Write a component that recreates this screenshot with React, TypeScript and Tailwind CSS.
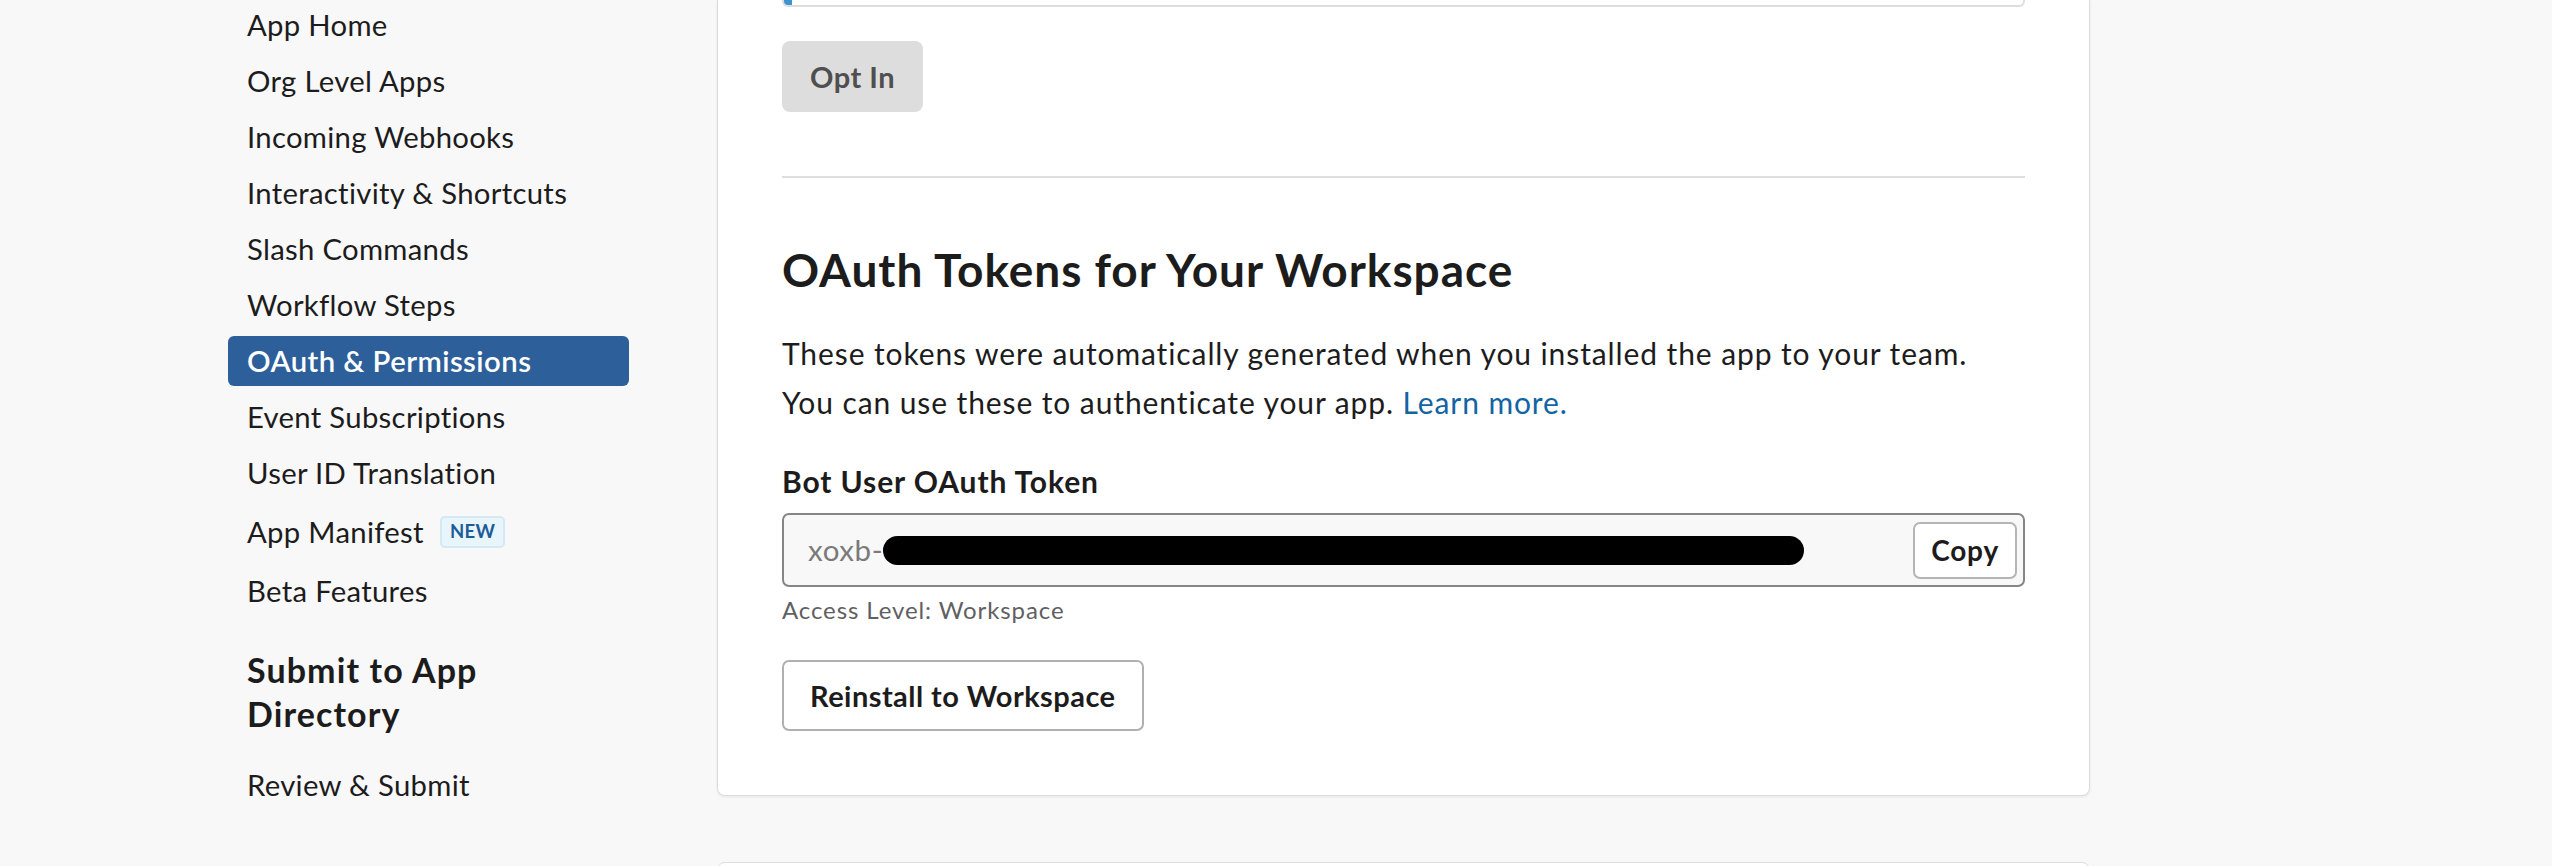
const navItems = [
  'App Home',
  'Org Level Apps',
  'Incoming Webhooks',
  'Interactivity & Shortcuts',
  'Slash Commands',
  'Workflow Steps',
  'OAuth & Permissions',
  'Event Subscriptions',
  'User ID Translation',
];

export default function App() {
  return (
    <div className="h-[866px] overflow-hidden bg-[#f8f8f8] font-['Lato','Noto_Sans',sans-serif] text-[#1d1c1d]">
      <div className="flex items-start pl-[228px]">
        {/* sidebar */}
        <nav className="flex w-[401px] shrink-0 flex-col text-[29.3px] tracking-[0.3px]">
          {navItems.map((label) => {
            const active = label === 'OAuth & Permissions';
            return (
              <div
                key={label}
                className={`mb-[6px] flex h-[50px] items-center rounded-[6px] px-[19px] ${
                  active ? 'bg-[#2d5f9b] font-semibold tracking-[0.45px] text-white' : ''
                }`}
              >
                {label}
              </div>
            );
          })}
          <div className="mb-[6px] flex h-[56px] items-center gap-[16px] px-[19px]">
            App Manifest
            <span className="flex h-[32px] items-center rounded-[5px] border-2 border-[#d4e9f4] bg-[#e8f5fa] px-[8px] text-[18.5px] font-bold tracking-[0.4px] text-[#1d5b99]">
              NEW
            </span>
          </div>
          <div className="flex h-[50px] items-center px-[19px]">Beta Features</div>

          <h3 className="mt-[32px] w-[290px] px-[19px] text-[34px] leading-[44px] font-bold tracking-[1.1px]">
            Submit to App Directory
          </h3>
          <div className="mt-[24px] flex h-[50px] items-center px-[19px]">Review &amp; Submit</div>
        </nav>

        {/* main column */}
        <main className="ml-[88px] flex w-[1373px] shrink-0 flex-col">
          <section className="rounded-b-[8px] border border-t-0 border-[#dddddd] bg-white px-[64px] pb-[64px] shadow-[0_1px_3px_rgba(0,0,0,0.08)]">
            {/* bottom of the field above */}
            <div className="flex h-[7px] overflow-hidden rounded-b-[6px] border-2 border-t-0 border-[#dddddd]">
              <div className="w-[8px] bg-[#3d94d1]" />
            </div>

            <button className="mt-[34px] flex h-[71px] items-center rounded-[8px] bg-[#dddddd] px-[28px] text-[29px] font-bold tracking-[0.5px] text-[#4f4f4f]">
              Opt In
            </button>

            <div className="mt-[64px] h-[2px] bg-[#dedede]" />

            <h2 className="mt-[64px] text-[46px] leading-[55px] font-bold tracking-[0.95px]">
              OAuth Tokens for Your Workspace
            </h2>

            <p className="mt-[32px] text-[30px] leading-[48.8px] tracking-[0.9px]">
              These tokens were automatically generated when you installed the app to your team.
              <br />
              You can use these to authenticate your app.{' '}
              <a className="text-[#1264a3]">Learn more.</a>
            </p>

            <div className="mt-[30px] text-[30px] leading-[48.8px] font-bold tracking-[0.9px]">Bot User OAuth Token</div>

            <div className="mt-[8px] flex h-[74px] items-center rounded-[7px] border-2 border-[#868686] bg-[#f8f8f8] pr-[6px] pl-[24px]">
              <span className="text-[29.5px] tracking-[0.6px] text-[#7a7a7a]">xoxb-</span>
              <span className="h-[29px] w-[921px] rounded-full bg-black" />
              <button className="ml-auto flex h-[57px] items-center rounded-[7px] border-2 border-[#b5b5b5] bg-white px-[16px] text-[28px] font-bold tracking-[0.8px]">
                Copy
              </button>
            </div>

            <div className="mt-[6px] text-[24px] leading-[34px] tracking-[0.9px] text-[#616061]">Access Level: Workspace</div>

            <button className="mt-[33px] flex h-[71px] items-center rounded-[7px] border-2 border-[#b0b0b0] bg-white px-[26px] text-[29px] font-bold tracking-[0.45px]">
              Reinstall to Workspace
            </button>
          </section>

          <section className="mt-[66px] h-[300px] rounded-[8px] border border-[#dddddd] bg-white" />
        </main>
      </div>
    </div>
  );
}
